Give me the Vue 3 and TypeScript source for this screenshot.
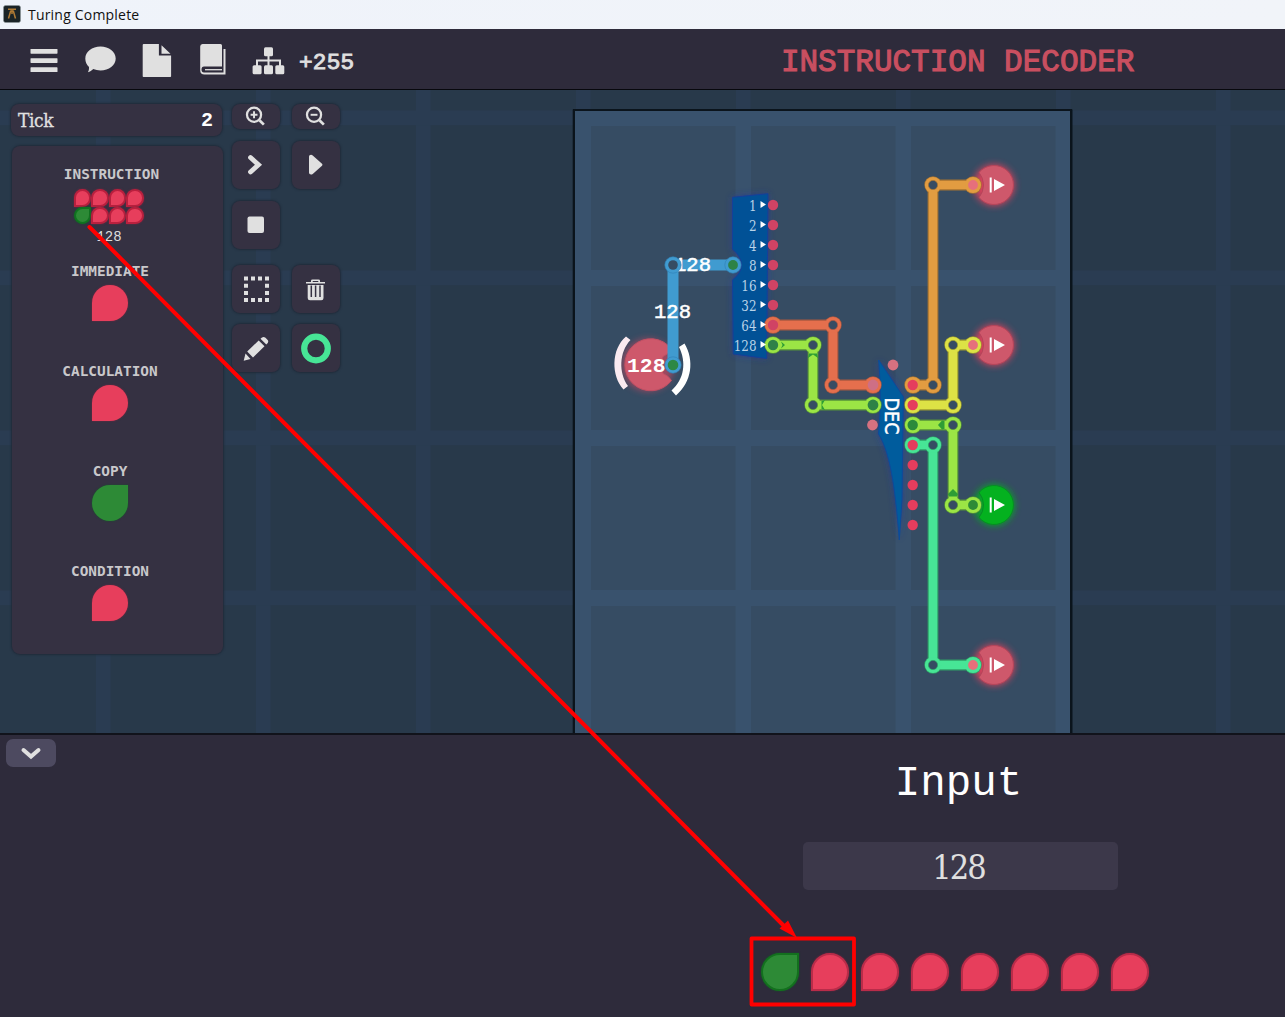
<script setup lang="ts">
interface Point { x: number; y: number }
interface Wire { color: string; edge: string; points: Point[] }
interface Gate { name: string; on: boolean }
interface Output { y: number; on: boolean }

const wire = (color: string, edge: string, ...pts: number[][]): Wire => ({
  color,
  edge,
  points: pts.map(([x, y]) => ({ x, y })),
})

const wires: Wire[] = [
  wire('#e56f4d', '#a85840', [773, 325], [833, 325], [833, 385], [873, 385]),
  wire('#9be545', '#55913a', [773, 345], [813, 345], [813, 405], [873, 405]),
  wire('#e29c41', '#a37232', [913, 385], [933, 385], [933, 185], [973, 185]),
  wire('#dde245', '#9b9a30', [913, 405], [953, 405], [953, 345], [973, 345]),
  wire('#9be545', '#55913a', [913, 425], [953, 425], [953, 505], [973, 505]),
  wire('#47e596', '#2f9d67', [913, 445], [933, 445], [933, 665], [973, 665]),
]
const toPath = (pts: Point[]) => 'M' + pts.map(p => `${p.x} ${p.y}`).join('L')

const bits = [1, 2, 4, 8, 16, 32, 64, 128]
const outputs: Output[] = [
  { y: 185, on: false },
  { y: 345, on: false },
  { y: 505, on: true },
  { y: 665, on: false },
]
const gates: Gate[] = [
  { name: 'IMMEDIATE', on: false },
  { name: 'CALCULATION', on: false },
  { name: 'COPY', on: true },
  { name: 'CONDITION', on: false },
]
const flowMarks = [
  'M809 353.500H817L818 358L813 354.500L808 358Z',
  'M821.500 401V409L825 410L822 405L825 400Z',
  'M781 341.500L785 345L781 348.500L782.500 345Z',
  'M944.500 421V429L942 429.500L938 425L942 420.500Z',
  'M949 496.500H957L958 494L953 489L948 494Z',
]
const columns = [-64, 96, 256, 416, 576, 736, 896, 1056, 1216]
const rows = [110, 270, 430, 590]
const memory = [false, false, false, false, true, false, false, false]
const inputBits = [true, false, false, false, false, false, false, false]
</script>

<template>
  <div class="window">
    <header class="titlebar">
      <svg width="18" height="18" viewBox="0 0 18 18">
        <rect x=".5" y=".5" width="17" height="17" rx="2" fill="#1b2427" stroke="#8e979b" stroke-width=".6" />
        <path d="M5 4.2h8M9 5v4M7.8 5.500L5.500 13.500M10.200 5.500L12.500 13.500" stroke="#b07b35" stroke-width="1.500" fill="none" />
      </svg>
      <span>Turing Complete</span>
    </header>

    <nav class="toolbar">
      <div class="tools">
        <svg viewBox="0 0 40 40">
          <g fill="#e0e0e0"><rect x="6.500" y="9" width="27" height="4.700" rx=".6" /><rect x="6.500" y="18.200" width="27" height="4.700" rx=".6" /><rect x="6.500" y="27.300" width="27" height="4.700" rx=".6" /></g>
        </svg>
        <svg viewBox="0 0 40 40">
          <path d="M20.500 6.500c8.400 0 15.200 5.400 15.200 12s-6.800 12-15.200 12c-2.600 0-5-.5-7.200-1.400-1.600 1.600-3.300 2.700-5.400 3.200 1-1.600 1.200-3.500 1.100-5.200C6.700 24.900 5.300 21.800 5.300 18.500c0-6.600 6.800-12 15.200-12z" fill="#e0e0e0" />
        </svg>
        <svg viewBox="0 0 40 40">
          <path d="M7.700 4h15.200v11.500h12.200V36.200q0 .8-.8.800H7.500q-.8 0-.8-.8V5q0-1 1-1zM25.500 5.200l9 8.500h-9z" fill="#e0e0e0" />
        </svg>
        <svg viewBox="0 0 40 40">
          <path d="M10.500 4H28.500q1.500 0 1.500 1.500V26.500H12q-2.500 0-2.500 3t2.500 3H31.500V9h2V34.500H12.500q-4.300 0-4.300-4V6.500q0-2.500 2.300-2.500z" fill="#e0e0e0" /><path d="M13 29.700H30" stroke="#e0e0e0" stroke-width="1.300" />
        </svg>
        <svg viewBox="0 0 40 40">
          <g fill="#e0e0e0"><rect x="16" y="7.200" width="9" height="9" rx="1.500" /><rect x="4.600" y="25.200" width="9" height="9" rx="1.500" /><rect x="16" y="25.200" width="9" height="9" rx="1.500" /><rect x="27.300" y="25.200" width="9" height="9" rx="1.500" /></g>
          <path d="M20.500 16v10M9 26v-5.500h23V26" fill="none" stroke="#e0e0e0" stroke-width="2" />
        </svg>
      </div>
      <span class="score">+255</span>
      <h1>INSTRUCTION DECODER</h1>
    </nav>

    <main class="workspace">
      <svg class="board" width="1285" height="643" viewBox="0 90 1285 643">
        <defs>
          <filter id="glow" x="-50%" y="-50%" width="200%" height="200%"><feGaussianBlur stdDeviation="3.500" /></filter>
        </defs>
        <rect y="90" width="1285" height="643" fill="#28394a" />
        <g fill="#2a3c52">
          <rect v-for="x in columns" :key="x" :x="x" y="90" width="14.500" height="643" />
          <rect v-for="y in rows" :key="y" x="0" :y="y + .5" width="1285" height="14.700" />
        </g>
        <rect x="574" y="110" width="497" height="640" fill="#39526d" stroke="#0b141c" stroke-width="2" />
        <g fill="#364c63">
          <template v-for="y in rows" :key="y">
            <rect v-for="x in [591, 751, 911]" :key="x" :x="x" :y="y + 16" width="144.500" height="144" />
          </template>
        </g>
        <path d="M573.200 733V109.500H1072V733" fill="none" stroke="#0b141c" stroke-width="1" />

        <path d="M732.500 197.300L768 193.700L766.700 358.500L733.300 354L732.500 280Q741.500 273 741.500 265T732.500 249Z" fill="#2237a0" filter="url(#glow)" opacity=".7" />
        <path d="M732.500 197.300L768 193.700L766.700 358.500L733.300 354L732.500 280Q741.500 273 741.500 265T732.500 249Z" fill="#015196" stroke="#173f99" />

        <path d="M878.700 360L903.300 396.700L902 500L899.300 540C896 500 892 455 878.500 434Q882 400 878.700 360Z" fill="#2237a0" filter="url(#glow)" opacity=".7" />
        <path d="M878.700 360L903.300 396.700L902 500L899.300 540C896 500 892 455 878.500 434Q882 400 878.700 360Z" fill="#005c9d" stroke="#0d4a9b" />

        <g v-for="o in outputs" :key="o.y">
          <circle cx="994" :cy="o.y" r="20.500" :fill="o.on ? '#00b51c' : '#f0405a'" filter="url(#glow)" opacity=".85" />
          <path :transform="`translate(994 ${o.y})`" d="M-15 -12.500A19.500 19.500 0 1 1 -15 12.500Q-10.500 7 -10.500 0T-15 -12.500Z" :fill="o.on ? '#04b11f' : '#ce586b'" :stroke="o.on ? '#078c24' : '#b5455a'" />
          <path :transform="`translate(994 ${o.y})`" d="M-4.300 -7.500h2V7.500h-2zM0 -6L11 0L0 6Z" fill="#fff" />
        </g>

        <g fill="none">
          <g v-for="(w, i) in wires" :key="i">
            <path :d="toPath(w.points)" :stroke="w.edge" stroke-width="10.800" />
            <circle v-for="(p, j) in w.points" :key="j" :cx="p.x" :cy="p.y" r="8.700" :fill="w.edge" />
            <path :d="toPath(w.points)" :stroke="w.color" stroke-width="8.600" />
            <circle v-for="(p, j) in w.points" :key="'n' + j" :cx="p.x" :cy="p.y" r="8.100" :fill="w.color" />
            <circle v-for="(p, j) in w.points.slice(1, -1)" :key="'h' + j" :cx="p.x" :cy="p.y" r="4.600" fill="#364c63" :stroke="w.edge" stroke-width=".7" />
          </g>
        </g>
        <path v-for="m in flowMarks" :key="m" :d="m" fill="#2e9d35" />

        <circle v-for="(b, i) in bits" :key="b" cx="773" :cy="205 + i * 20" r="5.200" :fill="b === 128 ? '#2f8148' : '#d04364'" />
        <g v-for="(b, i) in bits" :key="'t' + b">
          <path :d="`M760.500 ${201 + i * 20}L766 ${204.500 + i * 20}L760.500 ${208 + i * 20}Z`" fill="#fff" />
          <text x="756.500" :y="211 + i * 20" class="bit" :textLength="String(b).length * 7.600" lengthAdjust="spacingAndGlyphs">{{ b }}</text>
        </g>
        <circle v-for="i in 8" :key="'d' + i" cx="912.700" :cy="365 + i * 20" r="5.200" :fill="i === 3 ? '#2b8a3b' : '#e53d5d'" />
        <circle cx="893" cy="365" r="5.400" fill="#d67180" />
        <circle cx="873" cy="385" r="5.400" fill="#ce6f85" />
        <circle cx="873" cy="405" r="5.400" fill="#2d8246" />
        <circle cx="872.500" cy="425" r="5.400" fill="#d67180" />
        <circle v-for="o in outputs" :key="'p' + o.y" cx="973" :cy="o.y" r="4.900" :fill="o.on ? '#2d8b36' : '#e66f7b'" />
        <text class="dec" transform="translate(884.500 397.500) rotate(90)" textLength="37" lengthAdjust="spacingAndGlyphs">DEC</text>

        <circle cx="648" cy="365" r="26" fill="#e4475e" filter="url(#glow)" opacity=".6" />
        <path d="M671.500 349A26 26 0 1 0 671.500 380.500Q669 376 663 373.500L660 365L663 356.500Q669 354 671.500 349Z" fill="#ce586b" stroke="#c14f63" />
        <path d="M673 365V265H733" fill="none" stroke="#409bd0" stroke-width="11" />
        <path d="M630.500 340L626 336.500C611 349 611 376 623.500 389.500L628 386C618.500 373 619 352 630.500 340Z" fill="#faeaf0" />
        <path d="M679 347L684.500 343.500C694.500 360 692 382 676 395.500L671.500 390.500C684.500 379 686.500 362 679 347Z" fill="#fff" />
        <text class="signal" x="654" y="318" textLength="37" lengthAdjust="spacingAndGlyphs">128</text>
        <text class="signal" x="674" y="271" textLength="37" lengthAdjust="spacingAndGlyphs">128</text>
        <text class="signal bold" x="627" y="372" textLength="38.500" lengthAdjust="spacingAndGlyphs">128</text>
        <g fill="#409bd0" stroke="#2f80b5" stroke-width=".6">
          <circle cx="673" cy="265" r="8.200" /><circle cx="733" cy="265" r="8.200" /><circle cx="673" cy="365" r="8.200" />
        </g>
        <circle cx="673" cy="265" r="4.800" fill="#364c63" />
        <circle cx="733" cy="265" r="4.900" fill="#2d8246" />
        <circle cx="673" cy="365" r="5.300" fill="#2d8846" />
      </svg>

      <div class="hud">
        <aside class="status">
          <div class="tick"><span>Tick</span><b>2</b></div>
          <section class="probes">
            <div class="probe first">
              <label>INSTRUCTION</label>
              <div class="byte"><i v-for="(m, i) in memory" :key="i" class="drop mini" :class="{ on: m }"></i></div>
              <small>128</small>
            </div>
            <div v-for="g in gates" :key="g.name" class="probe">
              <label>{{ g.name }}</label>
              <i class="drop mid" :class="{ on: g.on }"></i>
            </div>
          </section>
        </aside>
        <div class="controls">
          <div class="pair zoomers">
            <button><svg viewBox="0 0 48 26"><g fill="none" stroke="#e0e0e0"><circle cx="22" cy="11" r="7.200" stroke-width="2.300" /><path d="M27.500 16.500l4.500 4.500" stroke-width="2.800" /><path d="M18.500 11h7M22 7.500v7" stroke-width="2" /></g></svg></button>
            <button><svg viewBox="0 0 48 26"><g fill="none" stroke="#e0e0e0"><circle cx="22" cy="11" r="7.200" stroke-width="2.300" /><path d="M27.500 16.500l4.500 4.500" stroke-width="2.800" /><path d="M18.500 11h7" stroke-width="2" /></g></svg></button>
          </div>
          <div class="pair">
            <button><svg viewBox="0 0 48 48"><path d="M18.500 16.500L26.500 23.700L18.500 31" fill="none" stroke="#e0e0e0" stroke-width="4.800" stroke-linecap="round" /></svg></button>
            <button><svg viewBox="0 0 48 48"><path d="M17 15.500q0-1.800 2-1.800 1 0 2 1l9 8q1 1 0 2l-9 8q-1 .9-2 .9-2 0-2-1.800z" fill="#e0e0e0" /></svg></button>
          </div>
          <div class="pair wide">
            <button><svg viewBox="0 0 48 48"><rect x="15.500" y="15.500" width="16.500" height="16.500" rx="2" fill="#e0e0e0" /></svg></button>
          </div>
          <div class="pair edit">
            <button><svg viewBox="0 0 48 48"><g stroke="#e0e0e0" stroke-width="4" fill="none"><path d="M12 13.500H37M12 35H37" stroke-dasharray="4 3" /><path d="M14 18.700v4M14 26v4M35 18.700v4M35 26v4" /></g></svg></button>
            <button><svg viewBox="0 0 48 48"><path d="M14 18.500H33V17H28V15.800Q28 14.500 26.500 14.500H20.500Q19 14.500 19 15.800V17H14ZM20.700 17V16H26.300V17Z" fill="#e0e0e0" /><path d="M15.700 20H31.500V33q0 2.200-2.200 2.200H18q-2.300 0-2.300-2.200z" fill="#e0e0e0" /><path d="M19.300 20.500V32M23.600 20.500V32M28 20.500V32" stroke="#353142" stroke-width="1.500" /></svg></button>
          </div>
          <div class="pair">
            <button><svg viewBox="0 0 48 48"><path d="M11.700 36.700L13.500 29.500L18.500 35Z M15.200 27.500L26.700 16.500L32.500 22.200L21 33.500Z M28.500 14.800Q31 11.700 33.500 13.700L35.700 16Q37.300 18 34.300 20.500Z" fill="#e0e0e0" /></svg></button>
            <button><svg viewBox="0 0 48 48"><circle cx="24" cy="24.500" r="11.800" fill="none" stroke="#47e596" stroke-width="6.200" /></svg></button>
          </div>
        </div>
      </div>
    </main>

    <footer class="inspector">
      <button class="collapse"><svg width="50" height="28" viewBox="0 0 50 28"><path d="M17.500 11L25 17.500L32.500 11" fill="none" stroke="#e0e0e0" stroke-width="4" stroke-linecap="round" /></svg></button>
      <div class="input-form">
        <h2>Input</h2>
        <div class="field"><span>128</span></div>
        <div class="toggles"><i v-for="(b, i) in inputBits" :key="i" class="drop large" :class="{ on: b }"></i></div>
      </div>
    </footer>

    <svg class="annotation" width="1285" height="1017" viewBox="0 0 1285 1017">
      <path d="M89.500 227L786 928" stroke="#f00" stroke-width="4" stroke-linecap="round" />
      <path d="M797 938L779.500 928.500L788 920.500Z" fill="#f00" />
      <rect x="751.500" y="938.500" width="102.500" height="66" fill="none" stroke="#f00" stroke-width="3.800" stroke-linejoin="round" />
    </svg>
  </div>
</template>

<style>
body { margin: 0; overflow: hidden; }
</style>

<style scoped>
* { box-sizing: border-box; }
.window { position: relative; width: 1285px; height: 1017px; display: flex; flex-direction: column; overflow: hidden; background: #2e2b3b; color: #e0e0e0; font-family: "DejaVu Serif", serif; }
svg { display: block; flex: none; }
button { display: block; padding: 0; border: 0; }
.titlebar { flex: none; height: 29px; display: flex; align-items: center; gap: 7px; padding-left: 3px; background: linear-gradient(90deg, #eff3fa, #f1f4f9); color: #111; font: 14px "Open Sans", sans-serif; letter-spacing: .2px; }
.titlebar svg { margin-top: -2px; }
.toolbar { flex: none; height: 61px; display: flex; align-items: center; background: #2e2b3b; border-bottom: 1px solid #07080d; }
.tools { display: flex; gap: 16.100px; padding-left: 23.500px; margin-top: 1px; }
.tools svg { width: 40px; height: 40px; }
.score { width: 70px; margin: 7px 0 0 11px; font: 22.700px "Liberation Mono", monospace; -webkit-text-stroke: .9px #e0e0e0; letter-spacing: .3px; }
h1 { margin: 7px 0 0 412px; color: #c94f60; font: 31px "Liberation Mono", monospace; -webkit-text-stroke: 1.100px #c94f60; white-space: nowrap; }
.workspace { position: relative; flex: none; height: 643px; }
.board { width: 1285px; height: 643px; }
.hud { position: absolute; left: 11px; top: 14px; display: flex; gap: 9px; }
.status { width: 212px; }
.tick { height: 32px; width: 211px; display: flex; justify-content: space-between; align-items: center; padding: 0 9px 0 7px; border-radius: 8px; background: #353142; box-shadow: 0 0 2px 1px #202b3a; font-size: 19px; }
.tick span { font-family: "DejaVu Serif Condensed", "DejaVu Serif", serif; letter-spacing: -.4px; -webkit-text-stroke: .3px #e0e0e0; }
.tick b { color: #fff; font: bold 20px "Liberation Mono", monospace; }
.probes { width: 211px; height: 508px; margin: 10px 0 0 1px; padding-top: 20px; border-radius: 8px; background: #353142; box-shadow: 0 0 2px 1px #202b3a; }
.probe { height: 100px; display: flex; flex-direction: column; align-items: center; padding-right: 15px; }
.probe.first { height: 96.500px; padding-right: 12px; }
.probe label { height: 16px; font: bold 14.400px/16px "DejaVu Sans Mono", monospace; color: #c9c8cb; }
.probe .mid { margin-top: 6.500px; }
.byte { display: grid; grid-template-columns: repeat(4, 17.500px); margin: 7px 6px 0 0; }
.probe small { margin: 5px 5px 0 0; font: 14px/16px "Liberation Mono", monospace; color: #ddd; }
.drop { display: block; border-radius: 50% 50% 50% 0; background: #e73e5c; box-shadow: 0 0 2px #7d2740; }
.drop.on { border-radius: 50% 0 50% 50%; background: #2d8a36; box-shadow: 0 0 2px #13562a; }
.mini { width: 17.500px; height: 17.500px; border: 2.500px solid #b9203e; }
.mini.on { border-color: #0f7320; }
.mid { width: 36px; height: 36px; }
.large { width: 38px; height: 38px; border: 2px solid #b92c49; }
.large.on { border-color: #13701e; }
.controls { display: flex; flex-direction: column; margin-top: -.5px; }
.pair { display: flex; gap: 12px; margin-bottom: 12px; }
.pair.wide { margin-bottom: 16.500px; }
.pair.edit { margin-bottom: 10.800px; }
.pair button { width: 48px; height: 48px; border-radius: 8px; background: #353142; box-shadow: 0 0 2px 1px #202b3a; }
.pair.zoomers { margin-bottom: 11.500px; }
.pair.zoomers button { height: 25.500px; }
.pair button svg { width: 100%; height: 100%; }
.bit { font: 15px "DejaVu Serif Condensed", "DejaVu Serif", serif; fill: #b9d3e8; text-anchor: end; }
.dec { font: 20px "DejaVu Sans", sans-serif; fill: #fff; stroke: #fff; stroke-width: .5; }
.signal { font: 20px "Liberation Mono", monospace; fill: #fff; stroke: #fff; stroke-width: .5; }
.signal.bold { font-weight: bold; stroke-width: 0; }
.inspector { flex: 1; display: flex; background: #2e2b3b; border-top: 2px solid #11131b; padding: 4px 0 0 6px; }
.collapse { width: 50px; height: 28px; border-radius: 7px; background: #4d4a60; }
.input-form { width: 390px; margin-left: 710px; display: flex; flex-direction: column; }
h2 { width: 390px; margin: 21px 0 0; text-align: center; padding-right: 5px; color: #fff; font: 42.500px/48px "Liberation Mono", monospace; }
.field { width: 315px; height: 48px; margin: 34px 0 0 37px; display: flex; align-items: center; justify-content: center; border-radius: 5px; background: #3c384a; }
.field span { padding: 1px 4px 0 0; font: 34px "DejaVu Serif Condensed", "DejaVu Serif", serif; letter-spacing: -2px; }
.toggles { display: flex; gap: 12px; margin: 63px 0 0 -5px; }
.annotation { position: absolute; left: 0; top: 0; pointer-events: none; }
</style>
